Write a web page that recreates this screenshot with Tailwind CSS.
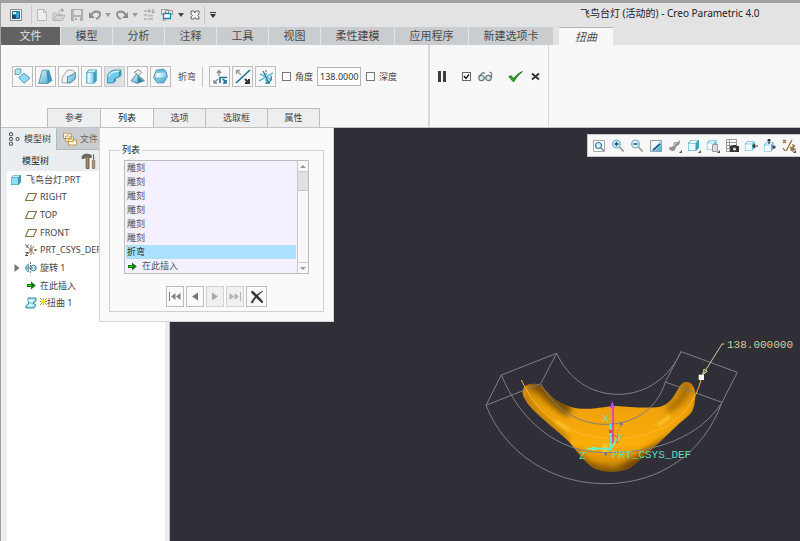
<!DOCTYPE html>
<html lang="zh-CN">
<head>
<meta charset="utf-8">
<title>飞鸟台灯 (活动的) - Creo Parametric 4.0</title>
<script src="https://cdn.jsdelivr.net/npm/@tailwindcss/browser@4"></script>
</head>
<body class="h-screen overflow-hidden flex flex-col border-t-3 border-l border-[#9f9f9f] bg-[#e3e3e3] text-[#444] text-[11px] leading-[14px] font-['Noto_Sans','Noto_Sans_CJK_SC',sans-serif]">

<svg class="absolute size-0" aria-hidden="true">
  <defs>
    <linearGradient id="cy" x1="0" y1="0" x2="1" y2="1"><stop offset="0" stop-color="#d8f4fc"/><stop offset="1" stop-color="#4aa8ca"/></linearGradient>
    <linearGradient id="cyh" x1="0" x2="1" y1="0" y2="0"><stop offset="0" stop-color="#7fcfea"/><stop offset=".3" stop-color="#f0fcff"/><stop offset="1" stop-color="#6cc4e4"/></linearGradient>
    <symbol id="cube" viewBox="0 0 12 12"><path d="M1 3.5 3.5 1H11v7L8.500 11H1z" fill="#3f95b4"/><path d="M1.500 3.800h6.500v6.700H1.500z" fill="#8edcf5"/><path d="M1.800 3.300 3.700 1.500h6.500L8.300 3.300z" fill="#c9f1fc"/></symbol>
    <symbol id="plane" viewBox="0 0 12 10"><path d="M3.500 1.500h8L8.500 8.500h-8z" fill="none" stroke="#8a7142" stroke-width="1.200"/></symbol>
    <symbol id="arrow" viewBox="0 0 9 9"><path d="M0 3h4V.5L8.800 4.500 4 8.500V6H0z" fill="#0b7a0b"/><path d="M1 4h4v1H1z" fill="#47c11c"/></symbol>
    <symbol id="wirecube" viewBox="0 0 14 14"><path d="M1 4.500 4 1.500h8.500V9l-3 3.500H1z" fill="#63bcd9"/><path d="M1.700 5h7.500v7H1.700z" fill="#f5fcfe"/><path d="M2.500 4.300 4.300 2.300h7L9.500 4.300z" fill="#e2f6fc"/></symbol>
  </defs>
</svg>

<header class="shrink-0">
  <div class="flex items-center h-6 relative">
    <div class="flex items-center" role="toolbar" aria-label="快速访问工具栏">
      <button class="mx-[7px]" aria-label="窗口"><svg class="size-4" viewBox="0 0 16 16"><path d="M2.500 2.500h11v11h-11z" fill="#fff" stroke="#888"/><path d="M4.500 4.500h7v7h-7z" fill="#3a9fd0" stroke="#206a92"/><path d="M4 8h4v4H4z" fill="#174e72"/><path d="M5 5h3v2H5z" fill="#d4effb"/></svg></button>
      <span class="w-px h-[18px] bg-[#c6c6c6] mr-[3px]"></span>
      <button class="mr-[3px]" aria-label="新建"><svg class="size-[14px]" viewBox="0 0 14 14"><path d="M2.500 1.500h6l3 3v8h-9z" fill="#eee" stroke="#bababa"/><path d="M8.500 1.500v3h3" fill="none" stroke="#bababa"/></svg></button>
      <button class="mr-1" aria-label="打开"><svg class="size-[14px]" viewBox="0 0 14 14"><path d="M1 12V5h3l1 1h5v2" fill="#d6d6d6" stroke="#b4b4b4"/><path d="M1 12.500 4 7.500h9l-2.500 5z" fill="#d2d2d2" stroke="#b4b4b4"/><path d="M7 4c1-2 2-2 4-2M9 .8 11.500 2 10 4" fill="none" stroke="#999"/></svg></button>
      <button class="mr-1" aria-label="保存"><svg class="size-[14px]" viewBox="0 0 14 14"><path d="M1.500 1.500h11v11h-11z" fill="#b4b4b4" stroke="#a8a8a8"/><path d="M4 2h7v5H4zM4 9h6v4H4z" fill="#e3e3e3"/><path d="M5 10h2v2H5z" fill="#aaa"/></svg></button>
      <button class="mr-[3px]" aria-label="撤消"><svg class="size-[14px]" viewBox="0 0 14 14"><path d="M3 7c3-5 9-4 9-1 0 2-1 4-4 5" fill="none" stroke="#8c8c8c" stroke-width="1.800"/><path d="M1 4v6h6z" fill="#8c8c8c"/></svg></button>
      <svg class="w-[6px] h-1 mr-1" viewBox="0 0 6 4"><path d="M0 0h6L3 4z" fill="#999"/></svg>
      <button class="mr-[3px]" aria-label="重做"><svg class="size-[14px]" viewBox="0 0 14 14"><path d="M11 7C8 2 2 3 2 6c0 2 1 4 4 5" fill="none" stroke="#8c8c8c" stroke-width="1.800"/><path d="M13 4v6H7z" fill="#8c8c8c"/></svg></button>
      <svg class="w-[6px] h-1 mr-[5px]" viewBox="0 0 6 4"><path d="M0 0h6L3 4z" fill="#999"/></svg>
      <button class="mr-[6px]" aria-label="重新生成"><svg class="size-3" viewBox="0 0 12 12"><path d="M1 1h3v2H1zM1 5h3v2H1zM1 9h3v2H1zM5 9h5v2H5zM5 5.500h5v2H5z" fill="#bcbcbc"/><path d="M6 4V1m-1.500 1L6 .7 7.500 2M10 0v3.500M8.500 2.500 10 4l1.500-1.500" stroke="#8e8e8e" fill="none"/></svg></button>
      <button class="mr-[5px]" aria-label="切换窗口"><svg class="w-3 h-3" viewBox="0 0 12 12"><path d="M.5.500h7v5h-7zM4.500 1.500h7v4h-7z" fill="#eee" stroke="#999"/><path d="M2.500 4.500h7v5h-7z" fill="#fff" stroke="#1b86ac" stroke-width="1.300"/><path d="M1 11h4" stroke="#999"/></svg></button>
      <svg class="w-[6px] h-1 mr-[5px]" viewBox="0 0 6 4"><path d="M0 0h6L3 4z" fill="#444"/></svg>
      <button class="mr-[3px]" aria-label="关闭窗口"><svg class="size-3" viewBox="0 0 12 12"><path d="M2 2h3l1 2 1-2h3v3L8.500 6.500 10 8v2H7L6 8.500 5 10H2V8l1.500-1.500L2 5z" fill="#f4f4f4" stroke="#666"/></svg></button>
      <span class="w-px h-[18px] bg-[#c6c6c6] mr-[5px]"></span>
      <button aria-label="自定义"><svg class="w-[6px] h-[6px]" viewBox="0 0 6 6"><path d="M0 0h6v1H0zM0 2h6L3 6z" fill="#333"/></svg></button>
    </div>
    <h1 class="absolute left-[579px] top-[2px] text-[10px] text-[#222] leading-4 whitespace-nowrap">飞鸟台灯 (活动的) - Creo Parametric 4.0</h1>
  </div>
  <nav class="flex h-[18px] gap-px text-[11px] leading-[18px] whitespace-nowrap text-[#4a4a4a]">
    <button class="w-[59px] bg-[#626262] text-[#e4e4e4]">文件</button>
    <button class="w-[51px] bg-[#c9cdd0]">模型</button>
    <button class="w-[51px] bg-[#c9cdd0]">分析</button>
    <button class="w-[51px] bg-[#c9cdd0]">注释</button>
    <button class="w-[51px] bg-[#c9cdd0]">工具</button>
    <button class="w-[51px] bg-[#c9cdd0]">视图</button>
    <button class="w-[73px] bg-[#c9cdd0]">柔性建模</button>
    <button class="w-[73px] bg-[#c9cdd0]">应用程序</button>
    <button class="w-[84px] bg-[#c9cdd0]">新建选项卡</button>
    <button class="w-[54px] ml-[5px] bg-[#f8f8f8] border-t border-[#b4b4b4] italic leading-[17px]">扭曲</button>
  </nav>
</header>

<section class="shrink-0 flex h-[83px] bg-[#f8f8f8] border-b border-[#c2c2c2]" aria-label="扭曲">
  <div class="w-[427px] flex flex-col">
    <div class="flex items-center gap-[2px] pl-[11px] h-[63px] whitespace-nowrap text-[9px]">
      <button class="size-[21px] shrink-0 border border-[#bdbdbd] grid place-items-center" aria-label="变换"><svg class="size-[17px]" viewBox="0 0 16 16"><path d="M1 2 2.500 1h4v3.500L5 6H1z" fill="#b5e8f6" stroke="#3f8dab" stroke-width=".8"/><path d="m4.500 9 5-4 5.500 4.500-5.500 5z" fill="#8edbf5" stroke="#4389a6" stroke-width=".8"/></svg></button>
      <button class="size-[21px] shrink-0 border border-[#bdbdbd] grid place-items-center" aria-label="扭曲"><svg class="size-[17px]" viewBox="0 0 16 16"><path d="M5 2h6l3 10-4 2.500H1.500z" fill="url(#cy)" stroke="#47879f" stroke-width=".8"/><path d="m9 3 1 11 3.500-2.500L11 2z" fill="#3b97ba"/></svg></button>
      <button class="size-[21px] shrink-0 border border-[#bdbdbd] grid place-items-center" aria-label="骨架"><svg class="size-[17px]" viewBox="0 0 16 16"><path d="M2 9 7 2h5l2 2-5 4v6H2z" fill="#f2f2f2" stroke="#999" stroke-width=".8"/><path d="M7 8c5-1 6-2 7.500-4v6L10 14H7z" fill="url(#cy)" stroke="#3b849e" stroke-width=".8"/></svg></button>
      <button class="size-[21px] shrink-0 border border-[#bdbdbd] grid place-items-center" aria-label="拉伸"><svg class="size-[17px]" viewBox="0 0 16 16"><path d="m3 4 2.500-2.500H13V12l-2.500 2.500H3z" fill="#439cba"/><path d="M3.500 4.500H10V14H3.500z" fill="url(#cyh)"/><path d="m4 4 2-2h6.500l-2 2z" fill="#c7f1fc"/></svg></button>
      <button class="size-[21px] shrink-0 border border-[#c8cacb] bg-[#dfe2e4] grid place-items-center" aria-label="折弯"><svg class="size-[17px]" viewBox="0 0 16 16"><path d="M1.500 14V9c0-4 3-7 8-7H14v5l-2 2H9v3l-2 2z" fill="#70cdea" stroke="#367f99" stroke-width=".8"/><path d="M2 8c1-3 4-5.500 8-5.500h3L11.500 4C7 4 4 5 3.500 8z" fill="#d5f6ff"/><path d="m12 4 2-2v5l-2 2zM7 11l2-2v3l-2 2z" fill="#3a96b7"/></svg></button>
      <button class="size-[21px] shrink-0 border border-[#bdbdbd] grid place-items-center" aria-label="扭转"><svg class="size-[17px]" viewBox="0 0 16 16"><path d="m5 4 4-2.500L12 4 9 7.500z" fill="#eee" stroke="#777" stroke-width=".8"/><path d="m7 6 2 1 5.500 5-7 2.500L2 12z" fill="url(#cy)" stroke="#477d92" stroke-width=".8"/><path d="m8 7 0 7 5-2z" fill="#3785a2"/></svg></button>
      <button class="size-[21px] shrink-0 border border-[#bdbdbd] grid place-items-center" aria-label="雕刻"><svg class="size-[17px]" viewBox="0 0 16 16"><path d="m4 2 7-1 2 2 1.500 5-3.500 6H5L1.500 9z" fill="url(#cyh)" stroke="#3e87a2" stroke-width=".8"/><path d="m4 5 7-1 2-1-2-2-7 1zM2 9h9l3-1-3 6H5z" fill="#45a3c4" opacity=".65"/></svg></button>
      <span class="ml-[5px] mr-1">折弯</span>
      <span class="w-px h-5 bg-[#c5c5c5] mr-1"></span>
      <button class="size-[21px] shrink-0 border border-[#bdbdbd] grid place-items-center" aria-label="旋转轴"><svg class="size-4" viewBox="0 0 16 16"><path d="M7 7V2M5 4l2-2.500L9 4M2 14l4-4M2 11v3h3" fill="none" stroke="#888" stroke-width="1.300"/><path d="M8 14V8.500h7M11 10l3 4M11 14h3v-3" fill="none" stroke="#16769c" stroke-width="1.700"/></svg></button>
      <button class="size-[21px] shrink-0 border border-[#bdbdbd] grid place-items-center" aria-label="反向"><svg class="size-4" viewBox="0 0 16 16"><path d="M1 14 15 1" stroke="#176e94" stroke-width="1.600"/><path d="m2 2 4 4M1.500 5V1.500H5" stroke="#999" fill="none" stroke-width="1.300"/><path d="m10 10 4 4M14 10v4h-4" stroke="#333" stroke-width="2" fill="none"/></svg></button>
      <button class="size-[21px] shrink-0 border border-[#bdbdbd] grid place-items-center" aria-label="下一轴"><svg class="size-4" viewBox="0 0 16 16"><path d="M8 1v14" stroke="#25799a" stroke-dasharray="2 1"/><path d="M1 12 15 4M2 5l12 6" stroke="#66b9d8" stroke-width="1.500"/><path d="m5 2 6 12M13 7c1 3 0 5-3 7M9 11v3h3" fill="none" stroke="#2384a8" stroke-width="1.300"/></svg></button>
      <label class="flex items-center gap-1 ml-1"><input type="checkbox" class="appearance-none size-[9px] border border-[#777] bg-white">角度</label>
      <input type="text" aria-label="角度值" value="138.0000" class="w-11 h-[19px] ml-[2px] border border-[#b5b5b5] bg-white pl-[2px] text-[9px] text-[#333]">
      <label class="flex items-center gap-1 ml-[3px]"><input type="checkbox" class="appearance-none size-[9px] border border-[#777] bg-white">深度</label>
    </div>
    <div class="relative flex h-[19px] ml-[46px] text-[9px] leading-[18px]">
      <button class="w-[53px] border-t border-l border-[#bdbdbd] bg-[#eceef0]">参考</button>
      <button class="w-[53px] border-t border-l border-[#bdbdbd] bg-[#fafafa] text-[#111]">列表</button>
      <button class="w-[52px] border-t border-l border-[#bdbdbd] bg-[#eceef0]">选项</button>
      <button class="w-[62px] border-t border-l border-[#bdbdbd] bg-[#eceef0]">选取框</button>
      <button class="w-[53px] border-t border-x border-[#bdbdbd] bg-[#eceef0]">属性</button>

      <div class="absolute z-10 left-[52px] top-5 w-[235px] h-[194px] bg-[#fafafa] border-l border-b border-r border-[#d4d4d4] px-[9px] pt-[15px]">
        <fieldset class="h-[169px] border border-[#cfcfcf] px-[14px] text-[9px] leading-[14px]">
          <legend class="px-[2px] ml-[-4px] text-[#222]">列表</legend>
          <div class="flex h-[114px] mt-[3px] border border-[#bcbcbc] bg-[#f5f0fe]">
            <ul class="flex-1 mx-px text-[#555]">
              <li class="pl-px">雕刻</li>
              <li class="pl-px">雕刻</li>
              <li class="pl-px">雕刻</li>
              <li class="pl-px">雕刻</li>
              <li class="pl-px">雕刻</li>
              <li class="pl-px">雕刻</li>
              <li class="pl-px bg-[#abe1fe] text-[#222]">折弯</li>
              <li class="pl-[2px] flex items-center gap-[5px]"><svg class="size-[9px]"><use href="#arrow"/></svg>在此插入</li>
            </ul>
            <div class="w-[11px] flex flex-col bg-[#f8f8f8] border-l border-[#c8c8c8]">
              <span class="h-[11px] grid place-items-center border-b border-[#ccc]"><svg class="w-[6px] h-[3px]" viewBox="0 0 6 3"><path d="M0 3h6L3 0z" fill="#999"/></svg></span>
              <span class="h-[19px] bg-[#dfe1e3] border-b border-[#c4c4c4]"></span>
              <span class="flex-1"></span>
              <span class="h-[11px] grid place-items-center border-t border-[#ccc]"><svg class="w-[6px] h-[3px]" viewBox="0 0 6 3"><path d="M0 0h6L3 3z" fill="#999"/></svg></span>
            </div>
          </div>
          <div class="flex justify-center gap-[2px] mt-3">
            <button class="w-[18px] h-[21px] border border-[#bdbdbd] grid place-items-center" aria-label="第一个"><svg class="w-3 h-[9px]" viewBox="0 0 12 9"><path d="M0 0h1v9H0zM6.500 1v7L2 4.500zM11.500 1v7L7 4.500z" fill="#808080"/></svg></button>
            <button class="w-[18px] h-[21px] border border-[#bdbdbd] grid place-items-center" aria-label="上一个"><svg class="w-2 h-[9px]" viewBox="0 0 8 9"><path d="M7 .5v8l-6-4z" fill="#777"/></svg></button>
            <button class="w-[18px] h-[21px] border border-[#d2d2d2] bg-[#eef0f1] grid place-items-center" aria-label="下一个"><svg class="w-2 h-[9px]" viewBox="0 0 8 9"><path d="M1 .5v8l6-4z" fill="#aaa"/></svg></button>
            <button class="w-[18px] h-[21px] border border-[#d2d2d2] bg-[#eef0f1] grid place-items-center" aria-label="最后一个"><svg class="w-3 h-[9px]" viewBox="0 0 12 9"><path d="M11 0h1v9h-1zM5.500 1v7L10 4.500zM.5 1v7L5 4.500z" fill="#b2b2b2"/></svg></button>
            <button class="size-[21px] border border-[#bdbdbd] grid place-items-center" aria-label="移除"><svg class="size-[14px]" viewBox="0 0 14 14"><path d="M1 2 2.500 1C6 4 10 8 13 12l-1 1C8 9 4 6 1 2z" fill="#333" stroke="#333" stroke-width=".6"/><path d="M13 1C9 4 5 8 2.500 13L1 12.500C4 7 8 3 13 1z" fill="#333" stroke="#333" stroke-width=".6"/></svg></button>
          </div>
        </fieldset>
      </div>
    </div>
  </div>
  <div class="w-[121px] border-l-2 border-r border-[#d6d8da] flex items-center h-full pb-[19px] pl-[7px]">
    <button class="mr-[15px]" aria-label="暂停"><svg class="w-[10px] h-[11px]" viewBox="0 0 10 11"><path d="M1 0h3v11H1zM6 0h3v11H6z" fill="#3d3d3d"/></svg></button>
    <label class="flex items-center gap-[7px]">
      <span class="relative size-[9px]"><input type="checkbox" checked aria-label="预览" class="block appearance-none size-[9px] border border-[#666] bg-white"><svg class="absolute inset-0 size-[9px] pointer-events-none" viewBox="0 0 9 9"><path d="m2 4 2 2.500L7 2.500" fill="none" stroke="#111" stroke-width="1.300"/></svg></span>
      <svg class="w-[15px] h-[11px]" viewBox="0 0 15 11"><g fill="#dde9ee" stroke="#6c7880" stroke-width="1.200"><circle cx="3.500" cy="7" r="2.700"/><circle cx="10.500" cy="7" r="2.700"/></g><path d="M1 5.500 5 1.500l2 1M6 7h2M13.500 7V2l-2-1" fill="none" stroke="#6c7880" stroke-width="1.200"/></svg>
    </label>
    <button class="ml-[15px] mr-2" aria-label="确定"><svg class="w-[15px] h-[11px]" viewBox="0 0 15 11"><path d="m.8 5.500 2.400-.8L5.500 7.500C8 4.500 10.500 2 14.500.5 11 3.500 8 7 6 10.500H5C3.500 8.500 2 7 .8 5.500z" fill="#34a01f" stroke="#176b23" stroke-width=".8"/></svg></button>
    <button aria-label="取消"><svg class="size-[9px]" viewBox="0 0 9 9"><path d="m1 1.500 7 6M8 1.500l-7 6" stroke="#333" stroke-width="2"/></svg></button>
  </div>
</section>

<main class="flex-1 min-h-0 flex">
  <aside class="w-[169px] shrink-0 flex flex-col bg-[#ebeef0] border-r border-[#b9bbbd] text-[9px]">
    <div class="flex h-[22px] whitespace-nowrap">
      <button class="w-[55px] flex items-center gap-1 pl-[7px]"><svg class="w-3 h-[14px] shrink-0" viewBox="0 0 12 14"><g fill="#fff" stroke="#555" stroke-width="1.100"><circle cx="3" cy="2.200" r="1.600"/><circle cx="3" cy="7" r="1.600"/><circle cx="3" cy="11.800" r="1.600"/><circle cx="9.500" cy="7" r="1.500"/></g></svg>模型树</button>
      <button class="flex-1 flex items-center gap-[3px] pl-[6px] bg-[#c9cdd0] border-b border-l border-[#b4b8ba] text-[#666]"><svg class="w-[14px] h-[15px] shrink-0" viewBox="0 0 14 14"><g fill="#fff8e6" stroke="#c79038" stroke-width=".9"><path d="M.5 7V1.500h3l1 1h4V7zM2.500 10V4.500h3l1 1h4V10zM5.500 13.500V7.500h3l1 1h4v5z"/></g></svg>文件...</button>
    </div>
    <div class="flex items-center h-[21px] pl-[21px] text-[#222]">模型树<svg class="size-4 ml-8" viewBox="0 0 14 14"><path d="M1 3c2-3 5-2 8-1v2H7v9.500H4.500V4L1 5z" fill="#a08a68" stroke="#5c4d3c" stroke-width=".7"/><path d="M1 3c2-3 5-2 8-1v1.500H4L1 5z" fill="#666"/><path d="M11 1v5" stroke="#666"/><path d="M10 6.500h2v7h-2z" fill="#b7a184" stroke="#77664f" stroke-width=".7"/></svg></div>
    <div class="flex-1 bg-white ml-[6px] mr-1">
      <ul class="grid auto-rows-fr h-[141px] whitespace-nowrap overflow-hidden leading-4">
        <li class="flex items-center gap-1 pl-[3px]"><svg class="size-3"><use href="#cube"/></svg>飞鸟台灯.PRT</li>
        <li class="flex items-center gap-[3px] pl-[18px]"><svg class="w-3 h-[10px] shrink-0"><use href="#plane"/></svg>RIGHT</li>
        <li class="flex items-center gap-[3px] pl-[18px]"><svg class="w-3 h-[10px] shrink-0"><use href="#plane"/></svg>TOP</li>
        <li class="flex items-center gap-[3px] pl-[18px]"><svg class="w-3 h-[10px] shrink-0"><use href="#plane"/></svg>FRONT</li>
        <li class="flex items-center gap-[3px] pl-[18px]"><svg class="size-3 shrink-0" viewBox="0 0 12 12"><path d="M6 1v10M3 10l6-8M3 3l6 7M4 6h4" stroke="#96794c"/><path d="m.5.500 1.500 2L3.500.5M2 2.500V4M9.500 5l2 2M11.500 5l-2 2M.5 8.500H3L.5 11.500H3" stroke="#333" fill="none" stroke-width=".9"/></svg>PRT_CSYS_DEF</li>
        <li class="flex items-center gap-[3px] pl-[7px]"><svg class="w-[6px] h-2 mr-[2px]" viewBox="0 0 6 8"><path d="M.5 0v8L5.500 4z" fill="#777"/></svg><svg class="w-3 h-3" viewBox="0 0 12 12"><path d="M3.500 2v8c-3-1-4-6 0-8z" fill="#8ed5ec" stroke="#3986a4" stroke-width=".7"/><circle cx="8.500" cy="6" r="2.800" fill="#cbeffa" stroke="#3986a4"/><path d="M5.500 0v12M0 6h12" stroke="#777" stroke-dasharray="2 1"/></svg>旋转 1</li>
        <li class="flex items-center gap-1 pl-[20px]"><svg class="size-[9px]"><use href="#arrow"/></svg>在此插入</li>
        <li class="flex items-center pl-[18px]"><svg class="size-3" viewBox="0 0 12 12"><path d="M3 1h8v3L8 6l3 2-2 3H1V9l3-3-1-2z" fill="#8ed9f1" stroke="#387f99" stroke-width=".9"/><path d="M3 2.500h7L7.500 5H4zM2 9l3-2 4 1-2 1.500z" fill="#e1f8ff"/></svg><svg class="size-[7px] mb-1 ml-[3px]" viewBox="0 0 7 7"><path d="M0 0l7 7M7 0 0 7M3.500 0v7M0 3.500h7" stroke="#8b8620" stroke-width=".8"/><circle cx="3.500" cy="3.500" r="2" fill="#fbea19"/></svg>扭曲 1</li>
      </ul>
    </div>
  </aside>

  <section class="relative flex-1 min-w-0 overflow-hidden bg-[#302f37]" aria-label="图形窗口">
    <div class="absolute top-[6px] left-[417px] right-0 h-[23px] bg-[#f8f8f8] border border-[#c9c9c9] border-r-0 flex items-center gap-[5px] pl-1 overflow-hidden" role="toolbar" aria-label="视图工具栏">
      <button class="shrink-0" aria-label="重新调整"><svg class="w-[14px] h-[14px]" viewBox="0 0 14 14"><path d="M1.500 1.500h11v11h-11z" fill="#fff" stroke="#aaa"/><circle cx="6.500" cy="6.500" r="3" fill="#d8eff8" stroke="#3183a5" stroke-width="1.200"/><path d="m9 9 3 3" stroke="#888" stroke-width="1.600"/></svg></button>
      <button class="shrink-0" aria-label="放大"><svg class="w-[14px] h-[14px]" viewBox="0 0 14 14"><circle cx="5.500" cy="5" r="4" fill="#d8f0f8" stroke="#6aa8c0"/><path d="M3.300 5h4.400M5.500 2.800v4.400" stroke="#17648a" stroke-width="1.500"/><path d="m8.500 8 4 4.500" stroke="#999" stroke-width="1.800"/></svg></button>
      <button class="shrink-0" aria-label="缩小"><svg class="w-[14px] h-[14px]" viewBox="0 0 14 14"><circle cx="5.500" cy="5" r="4" fill="#d8f0f8" stroke="#6aa8c0"/><path d="M3.300 5h4.400" stroke="#17648a" stroke-width="1.500"/><path d="m8.500 8 4 4.500" stroke="#999" stroke-width="1.800"/></svg></button>
      <button class="shrink-0" aria-label="重画"><svg class="w-[14px] h-[14px]" viewBox="0 0 14 14"><path d="M1.500 1.500h11v11h-11z" fill="#edfaff" stroke="#999"/><path d="M12.500 1.500v11h-11z" fill="url(#cy)"/><path d="m4 11 7-6" stroke="#164e68" stroke-width="1.500"/></svg></button>
      <button class="shrink-0" aria-label="渲染选项"><svg class="w-[14px] h-[14px]" viewBox="0 0 14 14"><path d="M1 9c1-2 3 0 4-2s0-4 3-4 3-1 4-2c0 4-1 5-3 6s-1 5-4 5c-2 0-4-1-4-3z" fill="#8f9295"/><path d="M6 7c1-2 1-3 3-3" stroke="#e4e4e4" fill="none"/><path d="M14 11v3h-3z" fill="#555"/></svg></button>
      <button class="shrink-0" aria-label="显示样式"><svg class="w-[14px] h-[14px]" viewBox="0 0 14 14"><path d="m1 4 3-3h8v8l-3 3H1z" fill="#3d9fc2"/><path d="M1.500 4.500h7v7h-7z" fill="#e4f8fe"/><path d="m2 4 2.500-2.500H11L8.500 4z" fill="#fff"/><path d="M14 11v3h-3z" fill="#555"/></svg></button>
      <button class="shrink-0" aria-label="已保存方向"><svg class="w-[14px] h-[14px]" viewBox="0 0 14 14"><use href="#wirecube" width="12" height="12"/><path d="M6.500 5.500h5v7h-5z" fill="#ddd" stroke="#999"/><path d="M14 11v3h-3z" fill="#555"/></svg></button>
      <button class="shrink-0" aria-label="视图管理器"><svg class="w-[14px] h-[14px]" viewBox="0 0 14 14"><path d="M1.500.5h10v12h-10zM1.500 3.500h10M1.500 6.500h10M1.500 9.500h10M4.500.5v12" fill="#fff" stroke="#999"/><path d="M5 7h2l1-1h3l1 1h2v6H5z" fill="#333"/><circle cx="9.500" cy="10" r="1.500" fill="#ddd"/></svg></button>
      <button class="shrink-0" aria-label="透视图"><svg class="w-[14px] h-[14px]" viewBox="0 0 14 14"><use href="#wirecube" width="12" height="14"/><path d="M14 7H9M11 5 9 7l2 2" stroke="#333" fill="none" stroke-width="1.200"/></svg></button>
      <button class="shrink-0" aria-label="注释显示"><svg class="w-[14px] h-[14px]" viewBox="0 0 14 14"><use href="#wirecube" y="2" width="12" height="12"/><path d="M6 5V0M4.500 1.800 6 0l1.500 1.800M9 8h4M11 6.500V10" stroke="#333" fill="none" stroke-width="1.200"/></svg></button>
      <button class="shrink-0" aria-label="基准显示"><svg class="w-[14px] h-[14px]" viewBox="0 0 14 14"><path d="m1 1 3 3M4 1 1 4M10 1 4 12M1 9l2 3M8 8l5 3M13 6l-4 6M11 5v8M8 10h6" stroke="#8e6d38" fill="none" stroke-width="1.200"/><path d="M14 11v3h-3z" fill="#555"/></svg></button>
    </div>

    <svg class="absolute left-[310px] top-[202px] w-[320px] h-[160px]" viewBox="0 0 960 480" role="img" aria-label="飞鸟台灯模型">
      <defs>
        <linearGradient id="body" x1="0" y1="0" x2="0" y2="1"><stop offset="0" stop-color="#c98400"/><stop offset=".32" stop-color="#f0a30a"/><stop offset=".68" stop-color="#fcae08"/><stop offset=".85" stop-color="#dd9405"/><stop offset="1" stop-color="#8b5c05"/></linearGradient>
        <filter id="soft" x="-30%" y="-30%" width="160%" height="160%"><feGaussianBlur stdDeviation="10"/></filter>
        <filter id="glow" x="-30%" y="-80%" width="160%" height="260%"><feGaussianBlur stdDeviation="4"/></filter>
        <clipPath id="bird"><path d="M127 188C128 165 152 158 175 163C205 178 210 220 290 235C340 241 370 228 410 228C450 231 500 236 540 230C590 218 590 158 618 156C640 154 652 185 644 215C641 255 620 258 590 288C540 335 500 375 455 410C425 430 365 430 335 410C305 388 290 360 265 333C230 300 190 270 160 240C145 224 130 205 127 188Z"/></clipPath>
      </defs>
      <g clip-path="url(#bird)">
        <path fill="url(#body)" d="M120 150h530v285H120z"/>
        <g filter="url(#soft)">
          <path d="M150 160c45 0 60 55 120 82" fill="none" stroke="#7a4f00" stroke-width="38"/>
          <path d="M130 195c25 55 90 90 135 140" fill="none" stroke="#a66e00" stroke-width="14"/>
          <path d="M660 205c-15 85-130 130-180 165s-60 30-70 60h60c60-60 110-75 190-170z" fill="#734a00"/>
          <path d="M622 155c0 40-25 65-60 85" fill="none" stroke="#935f00" stroke-width="16"/>
          <path d="M285 365c20 45 75 65 130 65" fill="none" stroke="#7f5300" stroke-width="24"/>
        </g>
        <g filter="url(#glow)" stroke-linecap="round">
          <path d="M230 275c12 10 20 15 38 24M535 284c15-8 24-16 34-24" stroke="#ffd84a" stroke-width="6" fill="none"/>
          <path d="M375 345v25" stroke="#ffe36a" stroke-width="8"/>
        </g>
      </g>
      <g fill="none" stroke="#7f7f84" stroke-width="3">
        <path d="M64 135 230 70 182 161 18 226 64 135C120 270 230 368 375 368C530 370 660 320 726 217L772 127 603 65 556 156 726 217"/>
        <path d="M230 70C265 145 330 193 415 193C500 193 570 140 603 65"/>
        <path d="M182 161C225 240 300 283 375 283C460 283 530 240 556 156"/>
        <path d="M18 226C75 370 215 461 375 461C540 461 670 370 726 217"/>
        <path d="m424 282-20 44" stroke-dasharray="4 5"/>
      </g>
      <path d="M124 150C190 290 300 325 410 325C520 323 630 275 663 150" fill="none" stroke="#ffb72b" stroke-width="3"/>
      <g fill="#77777c"><circle cx="424" cy="282" r="5"/><circle cx="377" cy="372" r="5"/></g>
      <path d="M399 338V225" stroke="#d13ad8" stroke-width="5"/><path d="M397 214 390 234h14z" fill="#c447ff"/>
      <path d="M389 317h23v21h-23z" fill="none" stroke="#df4a83" stroke-width="3"/>
      <path d="M391 359v-77M391 356h-70M391 359l20-32" stroke="#62f4cf" stroke-width="5"/>
      <path d="m391 285-5 18h11z" fill="#5bf0d9"/><ellipse cx="342" cy="356" rx="9" ry="5" fill="#65ffc0"/>
      <path d="M387 299h10v10h-10z" fill="#f0442d"/><path d="M386 353h10v10h-10z" fill="#50e6f5"/>
      <path d="m666 138 60-96h7" fill="none" stroke="#d7cf9c" stroke-width="3"/><path d="m668 134 4-17 10 7z" fill="none" stroke="#d7cf9c" stroke-width="3"/>
      <path d="M656 134h16v16h-16z" fill="#fff"/>
      <g class="font-['Liberation_Mono',monospace] text-[33px]">
        <text x="741" y="53" fill="#d2cb99">138.000000</text>
        <g fill="#67dfb0"><text x="396" y="384">PRT_CSYS_DEF</text><text x="368" y="276">X</text><text x="408" y="333">Y</text><text x="297" y="386">Z</text></g>
      </g>
    </svg>
  </section>
</main>
</body>
</html>
